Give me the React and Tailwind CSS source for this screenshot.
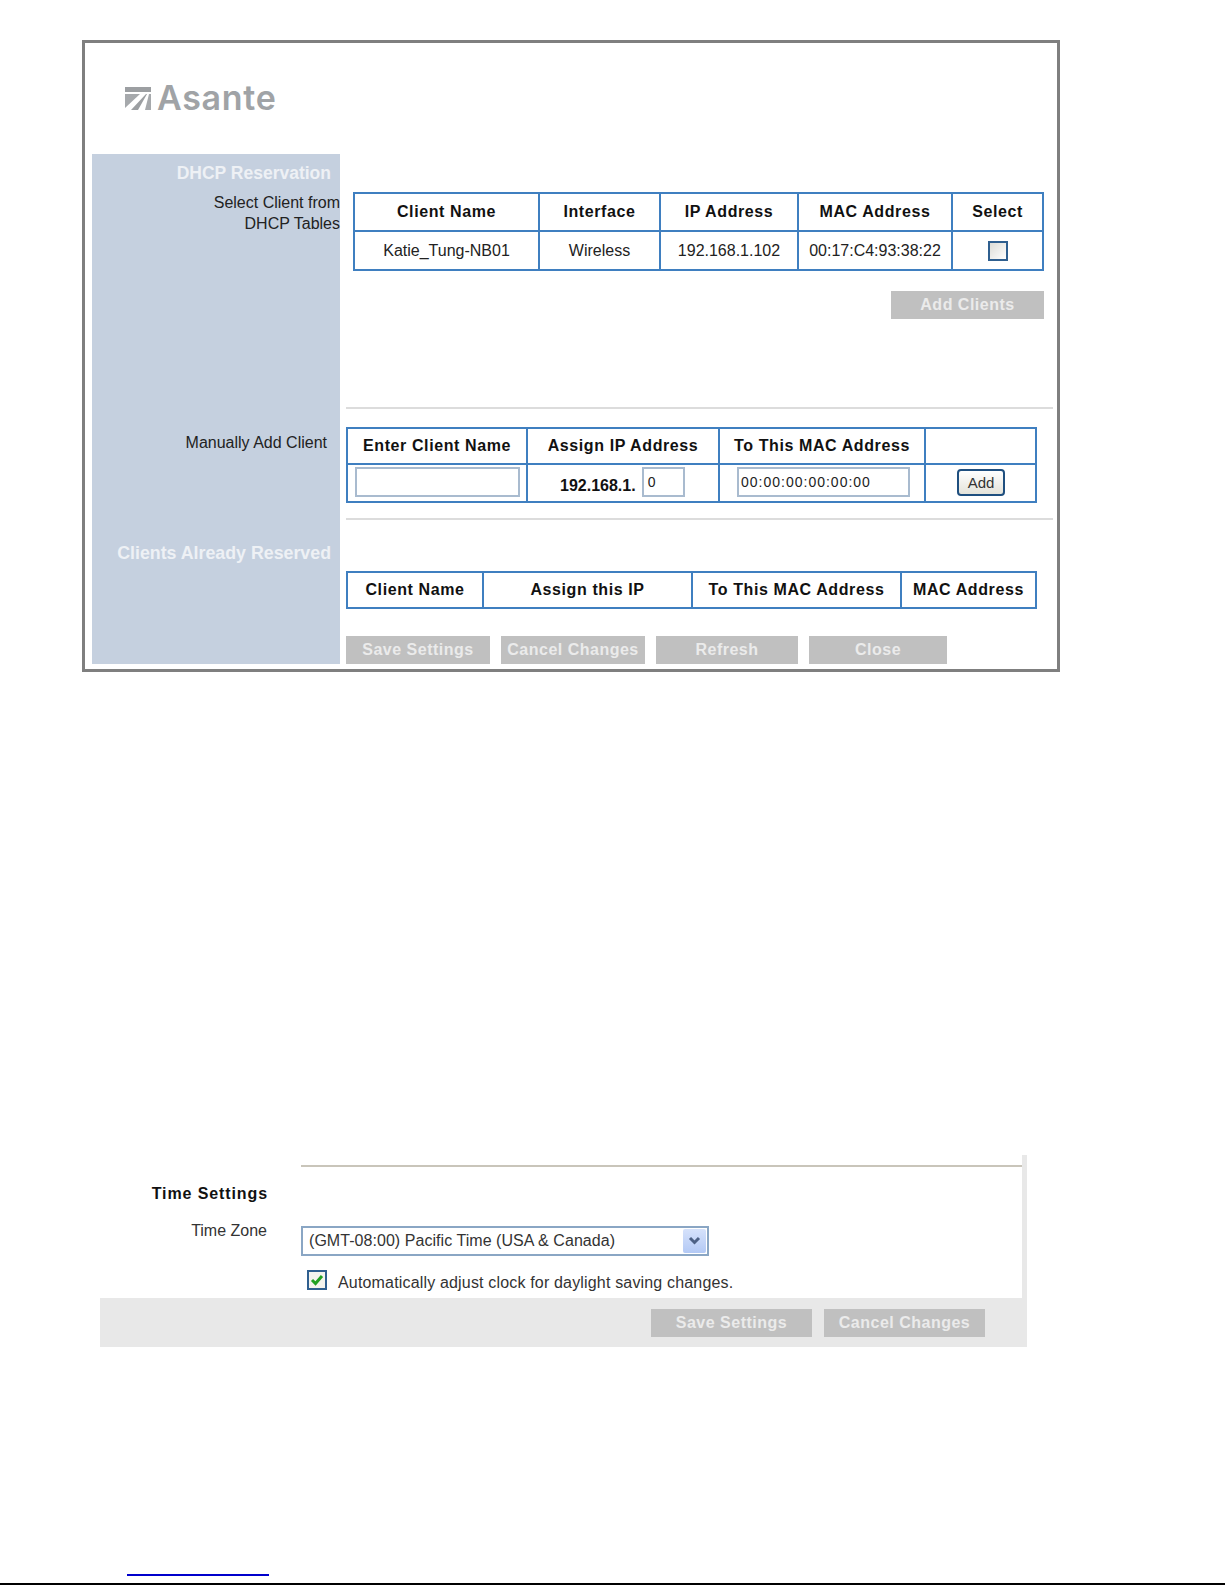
const cellBorder = "border-2 border-[#3f7fc0]";

function GreyButton({ label, className }) {
  return (
    <button className={`h-[28px] bg-[#c0c0c0] text-[#ebebeb] font-bold text-[16px] tracking-[0.5px] text-center ${className}`}>
      {label}
    </button>
  );
}

function TextBox({ value, className }) {
  return (
    <div className={`h-[30px] border-2 border-[#a9bbcf] bg-white text-[14px] tracking-[1px] text-[#222] pl-[2px] leading-[26px] ${className}`}>
      {value}
    </div>
  );
}

function HeaderRow({ cols, height }) {
  return (
    <tr className={height}>
      {cols.map((col, i) => (
        <th key={i} className={`${cellBorder} font-bold text-[16px] text-[#111] tracking-[0.6px] text-center p-0`}>
          {col}
        </th>
      ))}
    </tr>
  );
}

function Logo() {
  return (
    <div className="flex items-center gap-[6px] pl-[40px] pt-[42px]">
      <svg width="26" height="23" viewBox="0 0 26 23">
        <path d="M0 0H26V5H0Z" fill="#9c9fa2" />
        <path d="M0 7H15L0 21Z" fill="#a6a9ac" />
        <path d="M6 23L21 7H22L13 23Z" fill="#9c9fa2" />
        <path d="M20 23L24 7H26V23Z" fill="#a6a9ac" />
      </svg>
      <span className="font-['Inter',sans-serif] font-semibold text-[34px] leading-[26px] tracking-[0.7px] text-[#a0a3a6]">
        Asante
      </span>
    </div>
  );
}

function Sidebar() {
  return (
    <aside className="w-[248px] h-[510px] shrink-0 bg-[#c5d0df] flex flex-col items-end text-right">
      <div className="mt-[8px] mr-[9px] text-[#eef1f5] font-bold text-[17.5px] leading-[22px]">DHCP Reservation</div>
      <div className="mt-[8px] text-[#222] text-[16px] leading-[21px]">
        Select Client from
        <br />
        DHCP Tables
      </div>
      <div className="mt-[198px] mr-[13px] text-[#222] text-[16px] leading-[21px]">Manually Add Client</div>
      <div className="mt-[89px] mr-[9px] text-[#eef1f5] font-bold text-[17.8px] leading-[22px]">Clients Already Reserved</div>
    </aside>
  );
}

function Main() {
  return (
    <main className="w-[707px] ml-[6px] flex flex-col">
      <table className="ml-[7px] mt-[38px] w-[691px] h-[77px] table-fixed border-collapse">
        <colgroup>
          <col className="w-[185px]" />
          <col className="w-[121px]" />
          <col className="w-[138px]" />
          <col className="w-[154px]" />
          <col />
        </colgroup>
        <tbody>
          <HeaderRow height="h-[38px]" cols={["Client Name", "Interface", "IP Address", "MAC Address", "Select"]} />
          <tr className="h-[39px] text-[16px] text-[#222] text-center">
            <td className={cellBorder}>Katie_Tung-NB01</td>
            <td className={cellBorder}>Wireless</td>
            <td className={cellBorder}>192.168.1.102</td>
            <td className={`${cellBorder} whitespace-nowrap`}>00:17:C4:93:38:22</td>
            <td className={cellBorder}>
              <div className="mx-auto w-[20px] h-[20px] border-2 border-[#2f5f8f] bg-gradient-to-br from-[#dcdcd7] to-white" />
            </td>
          </tr>
        </tbody>
      </table>

      <div className="flex justify-end pr-[9px] mt-[20px]">
        <GreyButton label="Add Clients" className="w-[153px]" />
      </div>

      <div className="mt-[88px] h-[2px] bg-[#dcdcdc]" />

      <table className="mt-[18px] w-[691px] h-[74px] table-fixed border-collapse">
        <colgroup>
          <col className="w-[180px]" />
          <col className="w-[192px]" />
          <col className="w-[206px]" />
          <col />
        </colgroup>
        <tbody>
          <HeaderRow height="h-[36px]" cols={["Enter Client Name", "Assign IP Address", "To This MAC Address", ""]} />
          <tr className="h-[38px]">
            <td className={`${cellBorder} pl-[7px] pb-[2px]`}>
              <TextBox value="" className="w-[165px]" />
            </td>
            <td className={`${cellBorder} pl-[32px] pb-[2px]`}>
              <div className="flex items-center gap-[6px]">
                <span className="font-bold text-[16px] text-[#111] pt-[8px]">192.168.1.</span>
                <TextBox value="0" className="w-[43px] pl-[4px]" />
              </div>
            </td>
            <td className={`${cellBorder} pl-[17px] pb-[2px]`}>
              <TextBox value="00:00:00:00:00:00" className="w-[173px]" />
            </td>
            <td className={`${cellBorder} pl-[31px] pb-[1px]`}>
              <button className="block w-[48px] h-[27px] rounded-[4px] border-2 border-[#1f4f7f] bg-gradient-to-b from-white to-[#e4e3da] text-[15px] leading-[20px] text-[#333]">
                Add
              </button>
            </td>
          </tr>
        </tbody>
      </table>

      <div className="mt-[15px] h-[2px] bg-[#dcdcdc]" />

      <table className="mt-[51px] w-[691px] h-[36px] table-fixed border-collapse">
        <colgroup>
          <col className="w-[136px]" />
          <col className="w-[209px]" />
          <col className="w-[209px]" />
          <col />
        </colgroup>
        <tbody>
          <HeaderRow height="h-[36px]" cols={["Client Name", "Assign this IP", "To This MAC Address", "MAC Address"]} />
        </tbody>
      </table>

      <div className="mt-[27px] flex">
        <GreyButton label="Save Settings" className="w-[144px]" />
        <GreyButton label="Cancel Changes" className="w-[144px] ml-[11px]" />
        <GreyButton label="Refresh" className="w-[142px] ml-[11px]" />
        <GreyButton label="Close" className="w-[138px] ml-[11px]" />
      </div>
    </main>
  );
}

function TimeSettings() {
  return (
    <section className="ml-[100px] w-[927px] mt-[483px]">
      <div className="flex h-[143px]">
        <div className="w-[201px] pr-[33px] flex flex-col items-end">
          <div className="mt-[27px] whitespace-nowrap font-bold text-[16px] tracking-[0.9px] text-[#111]">Time Settings</div>
          <div className="mt-[13px] mr-[1px] whitespace-nowrap text-[16px] text-[#333]">Time Zone</div>
        </div>
        <div className="w-[726px] border-r-[5px] border-[#e8e8e8] flex flex-col">
          <div className="mt-[10px] h-[2px] bg-[#c9c5ba]" />
          <div className="mt-[59px] w-[408px] h-[30px] border-2 border-[#8aa6c4] bg-white flex items-center pl-[6px] pr-[1px] text-[16px] tracking-[0.05px] text-[#333] justify-between">
            <span>(GMT-08:00) Pacific Time (USA &amp; Canada)</span>
            <span className="w-[23px] h-[24px] rounded-[2px] bg-gradient-to-b from-[#d6e2fb] to-[#b3c9f5] flex items-center justify-center">
              <svg width="13" height="10" viewBox="0 0 13 10">
                <path d="M2 2L6.5 6.5L11 2" fill="none" stroke="#4d6185" strokeWidth="3" />
              </svg>
            </span>
          </div>
          <div className="mt-[14px] ml-[6px] flex items-start gap-[11px] text-[16px] tracking-[0.17px] text-[#333]">
            <span className="w-[20px] h-[20px] border-2 border-[#2f5f8f] bg-[#f4f4ee] flex items-center justify-center">
              <svg width="14" height="14" viewBox="0 0 14 14">
                <path d="M2 7L5.5 10.5L12 3" fill="none" stroke="#21a121" strokeWidth="3" />
              </svg>
            </span>
            <span className="mt-[1px]">Automatically adjust clock for daylight saving changes.</span>
          </div>
        </div>
      </div>
      <div className="h-[49px] bg-[#e8e8e8] flex pl-[551px] pt-[11px]">
        <GreyButton label="Save Settings" className="w-[161px]" />
        <GreyButton label="Cancel Changes" className="w-[161px] ml-[12px]" />
      </div>
    </section>
  );
}

export default function App() {
  return (
    <div className="w-[1225px] h-[1585px] bg-white font-['Liberation_Sans',Arial,sans-serif] flex flex-col overflow-hidden">
      <div className="ml-[82px] mt-[40px] w-[978px] h-[632px] shrink-0 border-[3px] border-[#7f7f7f]">
        <div className="h-[111px]">
          <Logo />
        </div>
        <div className="flex ml-[7px]">
          <Sidebar />
          <Main />
        </div>
      </div>

      <TimeSettings />

      <div className="mt-auto ml-[127px] w-[142px] h-[2px] bg-[#0000cc]" />
      <div className="mt-[7px] h-[2px] bg-black" />
    </div>
  );
}
